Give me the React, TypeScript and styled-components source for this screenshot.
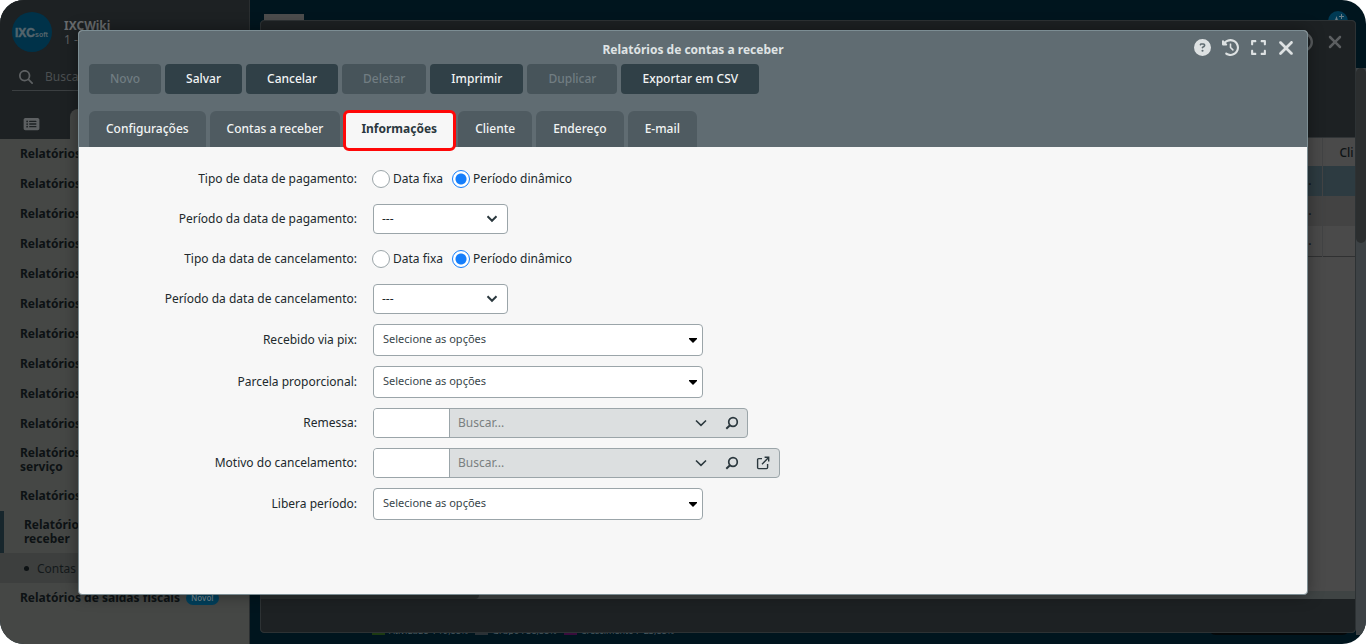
import React from "react";
import styled, { createGlobalStyle, css } from "styled-components";
import {
  FaCircleQuestion,
  FaClockRotateLeft,
  FaExpand,
  FaMagnifyingGlass,
  FaRectangleList,
  FaXmark,
} from "react-icons/fa6";

const GlobalStyle = createGlobalStyle`
  * { box-sizing: border-box; }
  body {
    margin: 0;
    background: #ffffff;
    color: #21292c;
    font: 12px/14px "Noto Sans", "Open Sans", sans-serif;
  }
  button, input, select { font: inherit; margin: 0; }
  ul { list-style: none; margin: 0; padding: 0; }
`;

const Page = styled.div`
  position: relative;
  display: flex;
  min-height: 100vh;
  border-radius: 24px;
  overflow: hidden;
  background: #00151e;
`;

/* Sidebar */

const Sidebar = styled.aside`
  flex: 0 0 250px;
  display: flex;
  flex-direction: column;
  background: #454745;
  border-right: 1px solid #2a2e30;
`;

const SidebarHead = styled.div`
  display: flex;
  flex-direction: column;
  height: 139px;
  padding: 12px 12px 0;
  background: #1d2123;
  color: #5d6062;
`;

const Brand = styled.div`
  display: flex;
  gap: 12px;
`;

const Logo = styled.svg`
  width: 40px;
  height: 40px;
`;

const BrandText = styled.div`
  padding-top: 7px;
`;

const BrandName = styled.div`
  font-size: 12px;
  line-height: 14px;
  font-weight: 700;
  color: #686b6d;
`;

const SearchRow = styled.label`
  display: flex;
  align-items: center;
  gap: 12px;
  height: 30px;
  margin-top: 9px;
  padding: 2px 0 0 7px;
  border-bottom: 1px solid #3b3f41;
  svg { width: 14px; height: 14px; flex: none; }
`;

const SearchInput = styled.input`
  min-width: 0;
  flex: 1;
  border: 0;
  padding: 0;
  background: transparent;
  color: #5d6062;
  &::placeholder { color: #4b4f51; opacity: 1; }
`;

const SideTabs = styled.div`
  display: flex;
  height: 30px;
  margin: 18px -12px 0 0;
`;

const SideTab = styled.button<{ $active?: boolean }>`
  display: flex;
  align-items: center;
  border: 0;
  padding: 0 0 0 11px;
  width: 58px;
  color: #5d6062;
  background: transparent;
  svg { width: 17px; height: 14px; }
  ${(p) =>
    p.$active &&
    css`
      flex: 1;
      background: #454745;
      border-radius: 8px 8px 0 0;
    `}
`;

const MenuItem = styled.li<{ $tall?: boolean; $active?: boolean }>`
  padding: ${(p) => (p.$tall ? 7 : 8)}px 20px;
  font-weight: 700;
  line-height: 14px;
  color: #0d1214;
  ${(p) =>
    p.$active &&
    css`
      border-left: 4px solid #17262c;
    `}
`;

const MenuLine = styled.span`
  display: block;
`;

const SubItem = styled.li`
  display: flex;
  align-items: center;
  gap: 8px;
  height: 30px;
  padding: 1px 0 0 24px;
  background: #3d3f3e;
  color: #14191b;
  &::before {
    content: "";
    width: 5px;
    height: 5px;
    border-radius: 50%;
    background: #0d1214;
  }
`;

const NewBadge = styled.span`
  display: inline-block;
  margin-left: 6px;
  padding: 0 5px;
  border-radius: 8px;
  background: #003f5a;
  color: #6b7f88;
  font-size: 8px;
  font-weight: 600;
  line-height: 14px;
  vertical-align: top;
`;

/* Dashboard area behind the windows */

const Dashboard = styled.main`
  flex: 1;
  min-width: 0;
  display: flex;
  flex-direction: column;
  justify-content: space-between;
`;

const TopStrip = styled.div`
  display: flex;
  justify-content: space-between;
  padding: 11px 18px 0 14px;
`;

const TopTab = styled.div`
  width: 40px;
  height: 20px;
  margin-top: 3px;
  background: #4c4c4c;
`;

const Assistant = styled.div`
  display: flex;
  justify-content: center;
  width: 20px;
  height: 20px;
  padding-top: 3px;
  border-radius: 50%;
  background: #003a54;
  color: #6a7d86;
  svg { width: 12px; height: 12px; }
`;

const Legend = styled.div`
  display: flex;
  align-items: flex-end;
  gap: 7px;
  height: 12px;
  margin-bottom: 9px;
  padding: 0 16px 0 122px;
  overflow: hidden;
  color: #4a5a61;
  font-size: 9px;
  line-height: 8px;
`;

const LegendEntry = styled.span<{ $color: string }>`
  display: flex;
  gap: 4px;
  align-items: flex-end;
  white-space: pre;
  &::before {
    content: "";
    width: 13px;
    height: 12px;
    background: ${(p) => p.$color};
  }
`;

const Pill = styled.div`
  width: 142px;
  height: 12px;
  margin-left: auto;
  border-radius: 0 0 8px 8px;
  background: #050809;
`;

const PageScroll = styled.div`
  position: absolute;
  right: 0;
  top: 68px;
  bottom: 9px;
  width: 10px;
  background: #3d4245;
`;

const PageThumb = styled.div`
  height: 175px;
  border-radius: 5px;
  background: #2b2e2f;
`;

/* List window */

const BackWindow = styled.section`
  position: absolute;
  inset: 20px 10px 11px 260px;
  display: flex;
  flex-direction: column;
  border: 1px solid #2d3234;
  border-radius: 4px;
  overflow: hidden;
  background: #4a4a4a;
`;

const BackHead = styled.header`
  display: flex;
  justify-content: flex-end;
  gap: 12px;
  height: 117px;
  padding: 11px 10px 0 0;
  background: #1d2123;
  border-bottom: 1px solid #313537;
  color: #5b5e60;
  svg { width: 20px; height: 20px; }
`;

const BackTable = styled.table`
  width: 100%;
  border-collapse: collapse;
  table-layout: fixed;
  color: #0d1214;
  border-bottom: 1px solid #303132;
  th, td {
    height: 30px;
    padding: 0;
    overflow: hidden;
    white-space: nowrap;
    text-align: right;
    border-right: 1px solid #424344;
    font-weight: 500;
  }
  th { height: 28px; }
  td { padding-right: 10px; }
  th:last-child { width: 33px; padding: 2px 0 0 17px; border: 0; text-align: left; }
  td:last-child { border: 0; }
`;

const BackRow = styled.tr<{ $color: string }>`
  background: ${(p) => p.$color};
`;

const HorizontalScroll = styled.div`
  height: 8px;
  margin-top: auto;
  background: #3f4444;
`;

const HorizontalThumb = styled.div`
  width: 218px;
  height: 8px;
  border-radius: 0 0 4px 0;
  background: #2a302f;
`;

const BackFoot = styled.footer`
  height: 33px;
  background: #1d2123;
`;

/* Report window */

const Modal = styled.section`
  position: absolute;
  inset: 30px 58px 49px 78px;
  display: flex;
  flex-direction: column;
  border: 1px solid #7c8d93;
  border-radius: 4px;
  overflow: hidden;
  background: #f7f7f7;
  box-shadow: 0 0 16px rgba(0, 0, 0, 0.4);
`;

const ModalHead = styled.header`
  flex: none;
  background: #606c72;
`;

const TitleBar = styled.div`
  display: grid;
  grid-template-columns: 1fr auto 1fr;
  align-items: center;
  height: 33px;
  padding: 0 7px;
`;

const Title = styled.h1`
  grid-column: 2;
  margin: 4px 0 0;
  font-size: 12px;
  line-height: 14px;
  font-weight: 700;
  color: #dfe3e4;
`;

const WindowActions = styled.div`
  display: flex;
  justify-content: flex-end;
`;

const IconButton = styled.button`
  display: flex;
  align-items: center;
  justify-content: center;
  width: 28px;
  height: 24px;
  padding: 0;
  border: 0;
  background: transparent;
  color: #dde1e2;
`;

const Toolbar = styled.div`
  display: flex;
  gap: 4px;
  padding: 0 10px;
`;

const ToolButton = styled.button`
  height: 30px;
  padding: 0 21px 1px;
  border: 0;
  border-radius: 4px;
  background: #304047;
  color: #f2f4f4;
  font-weight: 550;
  &:disabled {
    background: #47545a;
    color: #717d82;
  }
`;

const Tabs = styled.div`
  display: flex;
  gap: 4px;
  padding: 17px 10px 0;
`;

const Tab = styled.button<{ $active?: boolean }>`
  position: relative;
  height: 36px;
  padding: 0 17px 1px;
  border: 0;
  border-radius: 6px 6px 0 0;
  background: #4f5b61;
  color: #f2f4f4;
  font-weight: 530;
  ${(p) =>
    p.$active &&
    css`
      background: #f7f7f7;
      color: #2b383e;
      font-weight: 700;
      &::after {
        content: "";
        position: absolute;
        inset: -1px -2px -4px -1px;
        border: 3px solid #ff0808;
        border-radius: 6px;
      }
    `}
`;

const Form = styled.form`
  display: flex;
  flex-direction: column;
  gap: 10px;
  padding: 17px 0;
`;

const Row = styled.div`
  display: grid;
  grid-template-columns: 278px 1fr;
  column-gap: 16px;
  align-items: center;
  min-height: 30px;
`;

const labelStyle = css`
  text-align: right;
  padding-bottom: 1px;
`;

const Label = styled.label`
  ${labelStyle}
`;

const GroupLabel = styled.span`
  ${labelStyle}
`;

const RadioGroup = styled.div`
  display: flex;
  align-items: center;
  gap: 9px;
  margin-left: -1px;
`;

const RadioLabel = styled.label`
  display: flex;
  align-items: center;
  gap: 3px;
`;

const Radio = styled.input`
  appearance: none;
  width: 18px;
  height: 18px;
  border: 1px solid #9ba5a9;
  border-radius: 50%;
  background: #ffffff;
  &:checked {
    border-color: #157efb;
    background: radial-gradient(circle, #157efb 0 5px, #ffffff 6px);
  }
`;

const SelectBox = styled.div<{ $wide?: boolean }>`
  display: grid;
  align-items: center;
  width: ${(p) => (p.$wide ? 330 : 135)}px;
  > * { grid-area: 1 / 1; }
  > svg {
    justify-self: end;
    margin-right: ${(p) => (p.$wide ? 6 : 10)}px;
    pointer-events: none;
  }
`;

const Select = styled.select<{ $wide?: boolean }>`
  appearance: none;
  width: 100%;
  height: ${(p) => (p.$wide ? 32 : 30)}px;
  padding: ${(p) => (p.$wide ? "0 20px 2px 9px" : "0 20px 0 8px")};
  border: 1px solid #9ba5a9;
  border-radius: 4px;
  background: #ffffff;
  color: ${(p) => (p.$wide ? "#38454a" : "#21292c")};
  font-size: ${(p) => (p.$wide ? 11 : 12)}px;
`;

const Lookup = styled.div<{ $open?: boolean }>`
  display: flex;
  width: ${(p) => (p.$open ? 407 : 375)}px;
  height: 30px;
  padding-right: ${(p) => (p.$open ? 1 : 0)}px;
  border: 1px solid #9ba5a9;
  border-radius: 4px;
  overflow: hidden;
  background: #dcdfe0;
`;

const CodeInput = styled.input`
  width: 76px;
  border: 0;
  border-right: 1px solid #9ba5a9;
  background: #ffffff;
  padding: 0 8px;
`;

const LookupInput = styled.input`
  flex: 1;
  min-width: 0;
  border: 0;
  padding: 0 8px 1px;
  background: transparent;
  &::placeholder { color: #7a7f81; opacity: 1; }
`;

const LookupButton = styled.button`
  display: flex;
  align-items: center;
  justify-content: center;
  width: 31px;
  padding: 0;
  border: 0;
  background: transparent;
  color: #2b383e;
`;

const Chevron = () => (
  <svg width="12" height="8" viewBox="0 0 12 8" fill="none" stroke="#2b383e" strokeWidth="2">
    <path d="M1.5 1.3 6 5.8l4.5-4.5" />
  </svg>
);

const ThinChevron = () => (
  <svg width="12" height="8" viewBox="0 0 12 8" fill="none" stroke="currentColor" strokeWidth="1.6">
    <path d="M1 1.5 6 6.3l5-4.8" />
  </svg>
);

const Caret = () => (
  <svg width="8" height="5" viewBox="0 0 8 5">
    <path d="M0 0h8v1L4 5 0 1z" fill="#000" />
  </svg>
);

const Lens = () => (
  <svg width="14" height="14" viewBox="0 0 14 14" fill="none" stroke="currentColor" strokeWidth="1.7">
    <circle cx="8" cy="6" r="4.3" />
    <path d="M5 9.2 1.3 12.8" strokeWidth="2" />
  </svg>
);

const OpenIcon = () => (
  <svg width="14" height="14" viewBox="0 0 14 14" fill="none" stroke="currentColor" strokeWidth="1.4">
    <path d="M6 2.6H2.6a1 1 0 0 0-1 1v8a1 1 0 0 0 1 1h8a1 1 0 0 0 1-1V8" />
    <path d="M6 8.2 12.6 1.5M8.6 1.3h4.1v4.2" />
  </svg>
);

const toolbar: [string, boolean][] = [
  ["Novo", false],
  ["Salvar", true],
  ["Cancelar", true],
  ["Deletar", false],
  ["Imprimir", true],
  ["Duplicar", false],
  ["Exportar em CSV", true],
];

const tabs = ["Configurações", "Contas a receber", "Informações", "Cliente", "Endereço", "E-mail"];

function RadioRow({ name, label }: { name: string; label: string }) {
  return (
    <Row>
      <GroupLabel id={name}>{label}</GroupLabel>
      <RadioGroup role="radiogroup" aria-labelledby={name}>
        <RadioLabel>
          <Radio type="radio" name={name} />
          Data fixa
        </RadioLabel>
        <RadioLabel>
          <Radio type="radio" name={name} defaultChecked />
          Período dinâmico
        </RadioLabel>
      </RadioGroup>
    </Row>
  );
}

function SelectRow({ id, label, wide }: { id: string; label: string; wide?: boolean }) {
  return (
    <Row>
      <Label htmlFor={id}>{label}</Label>
      <SelectBox $wide={wide}>
        <Select id={id} $wide={wide}>
          <option>{wide ? "Selecione as opções" : "---"}</option>
        </Select>
        {wide ? <Caret /> : <Chevron />}
      </SelectBox>
    </Row>
  );
}

function LookupRow({ id, label, open }: { id: string; label: string; open?: boolean }) {
  return (
    <Row>
      <Label htmlFor={id}>{label}</Label>
      <Lookup $open={open}>
        <CodeInput id={id} type="text" />
        <LookupInput type="text" placeholder="Buscar..." aria-label={label} />
        <LookupButton type="button" aria-label="Abrir lista"><ThinChevron /></LookupButton>
        <LookupButton type="button" aria-label="Pesquisar"><Lens /></LookupButton>
        {open && <LookupButton type="button" aria-label="Abrir cadastro"><OpenIcon /></LookupButton>}
      </Lookup>
    </Row>
  );
}

export default function App() {
  return (
    <Page>
      <GlobalStyle />
      <Sidebar>
        <SidebarHead>
          <Brand>
            <Logo viewBox="0 0 40 40">
              <circle cx="20" cy="20" r="20" fill="#003249" />
              <text x="3" y="25" fontFamily="Liberation Sans, sans-serif" fontSize="12" fontWeight="700" fill="#54646c" stroke="#54646c" strokeWidth="0.5">IXC</text>
              <text x="23" y="25" fontFamily="Liberation Sans, sans-serif" fontSize="7" fontWeight="700" fill="#54646c">soft</text>
            </Logo>
            <BrandText>
              <BrandName>IXCWiki</BrandName>
              <div>1 -</div>
            </BrandText>
          </Brand>
          <SearchRow>
            <FaMagnifyingGlass />
            <SearchInput type="text" placeholder="Buscar" aria-label="Buscar" />
          </SearchRow>
          <SideTabs>
            <SideTab type="button" aria-label="Lista"><FaRectangleList /></SideTab>
            <SideTab type="button" aria-label="Menu" $active />
          </SideTabs>
        </SidebarHead>
        <ul>
          {Array.from({ length: 10 }, (_, i) => (
            <MenuItem key={i}>Relatórios</MenuItem>
          ))}
          <MenuItem $tall>
            <MenuLine>Relatórios</MenuLine>
            <MenuLine>serviço</MenuLine>
          </MenuItem>
          <MenuItem>Relatórios</MenuItem>
          <MenuItem $tall $active>
            <MenuLine>Relatórios</MenuLine>
            <MenuLine>receber</MenuLine>
          </MenuItem>
          <SubItem>Contas</SubItem>
          <MenuItem>
            Relatórios de saídas fiscais
            <NewBadge>Novo!</NewBadge>
          </MenuItem>
        </ul>
      </Sidebar>

      <Dashboard>
        <TopStrip>
          <TopTab />
          <Assistant>
            <svg viewBox="0 0 12 12" fill="currentColor">
              <path d="M4.5 2 5.8 5.7 9.5 7 5.8 8.3 4.5 12 3.2 8.3 0 7l3.2-1.3zM9 0h1v2h2v1h-2v2H9V3H7V2h2z" />
            </svg>
          </Assistant>
        </TopStrip>
        <Legend>
          <LegendEntry $color="#1c3a12">Atividade  : 19,88%</LegendEntry>
          <LegendEntry $color="#2a3136">Grupo : 38,58%</LegendEntry>
          <LegendEntry $color="#3a0c3c">Crescimento : -23,88%</LegendEntry>
          <Pill />
        </Legend>
      </Dashboard>

      <PageScroll><PageThumb /></PageScroll>

      <BackWindow>
        <BackHead>
          <FaClockRotateLeft />
          <FaXmark />
        </BackHead>
        <BackTable>
          <thead>
            <BackRow $color="#4a4a4a"><th /><th>Cli</th></BackRow>
          </thead>
          <tbody>
            <BackRow $color="#2d3b41"><td>...</td><td /></BackRow>
            <BackRow $color="#434343"><td>...</td><td /></BackRow>
            <BackRow $color="#4a4a4a"><td>...</td><td /></BackRow>
          </tbody>
        </BackTable>
        <HorizontalScroll><HorizontalThumb /></HorizontalScroll>
        <BackFoot />
      </BackWindow>

      <Modal>
        <ModalHead>
          <TitleBar>
            <Title>Relatórios de contas a receber</Title>
            <WindowActions>
              <IconButton type="button" aria-label="Ajuda"><FaCircleQuestion size={17} /></IconButton>
              <IconButton type="button" aria-label="Histórico"><FaClockRotateLeft size={17} /></IconButton>
              <IconButton type="button" aria-label="Expandir"><FaExpand size={17} /></IconButton>
              <IconButton type="button" aria-label="Fechar"><FaXmark size={22} /></IconButton>
            </WindowActions>
          </TitleBar>
          <Toolbar>
            {toolbar.map(([text, enabled]) => (
              <ToolButton key={text} type="button" disabled={!enabled}>{text}</ToolButton>
            ))}
          </Toolbar>
          <Tabs role="tablist">
            {tabs.map((text) => (
              <Tab key={text} type="button" role="tab" $active={text === "Informações"} aria-selected={text === "Informações"}>
                {text}
              </Tab>
            ))}
          </Tabs>
        </ModalHead>
        <Form>
          <RadioRow name="tipo-pagamento" label="Tipo de data de pagamento:" />
          <SelectRow id="periodo-pagamento" label="Período da data de pagamento:" />
          <RadioRow name="tipo-cancelamento" label="Tipo da data de cancelamento:" />
          <SelectRow id="periodo-cancelamento" label="Período da data de cancelamento:" />
          <SelectRow id="pix" label="Recebido via pix:" wide />
          <SelectRow id="parcela" label="Parcela proporcional:" wide />
          <LookupRow id="remessa" label="Remessa:" />
          <LookupRow id="motivo" label="Motivo do cancelamento:" open />
          <SelectRow id="libera" label="Libera período:" wide />
        </Form>
      </Modal>
    </Page>
  );
}
